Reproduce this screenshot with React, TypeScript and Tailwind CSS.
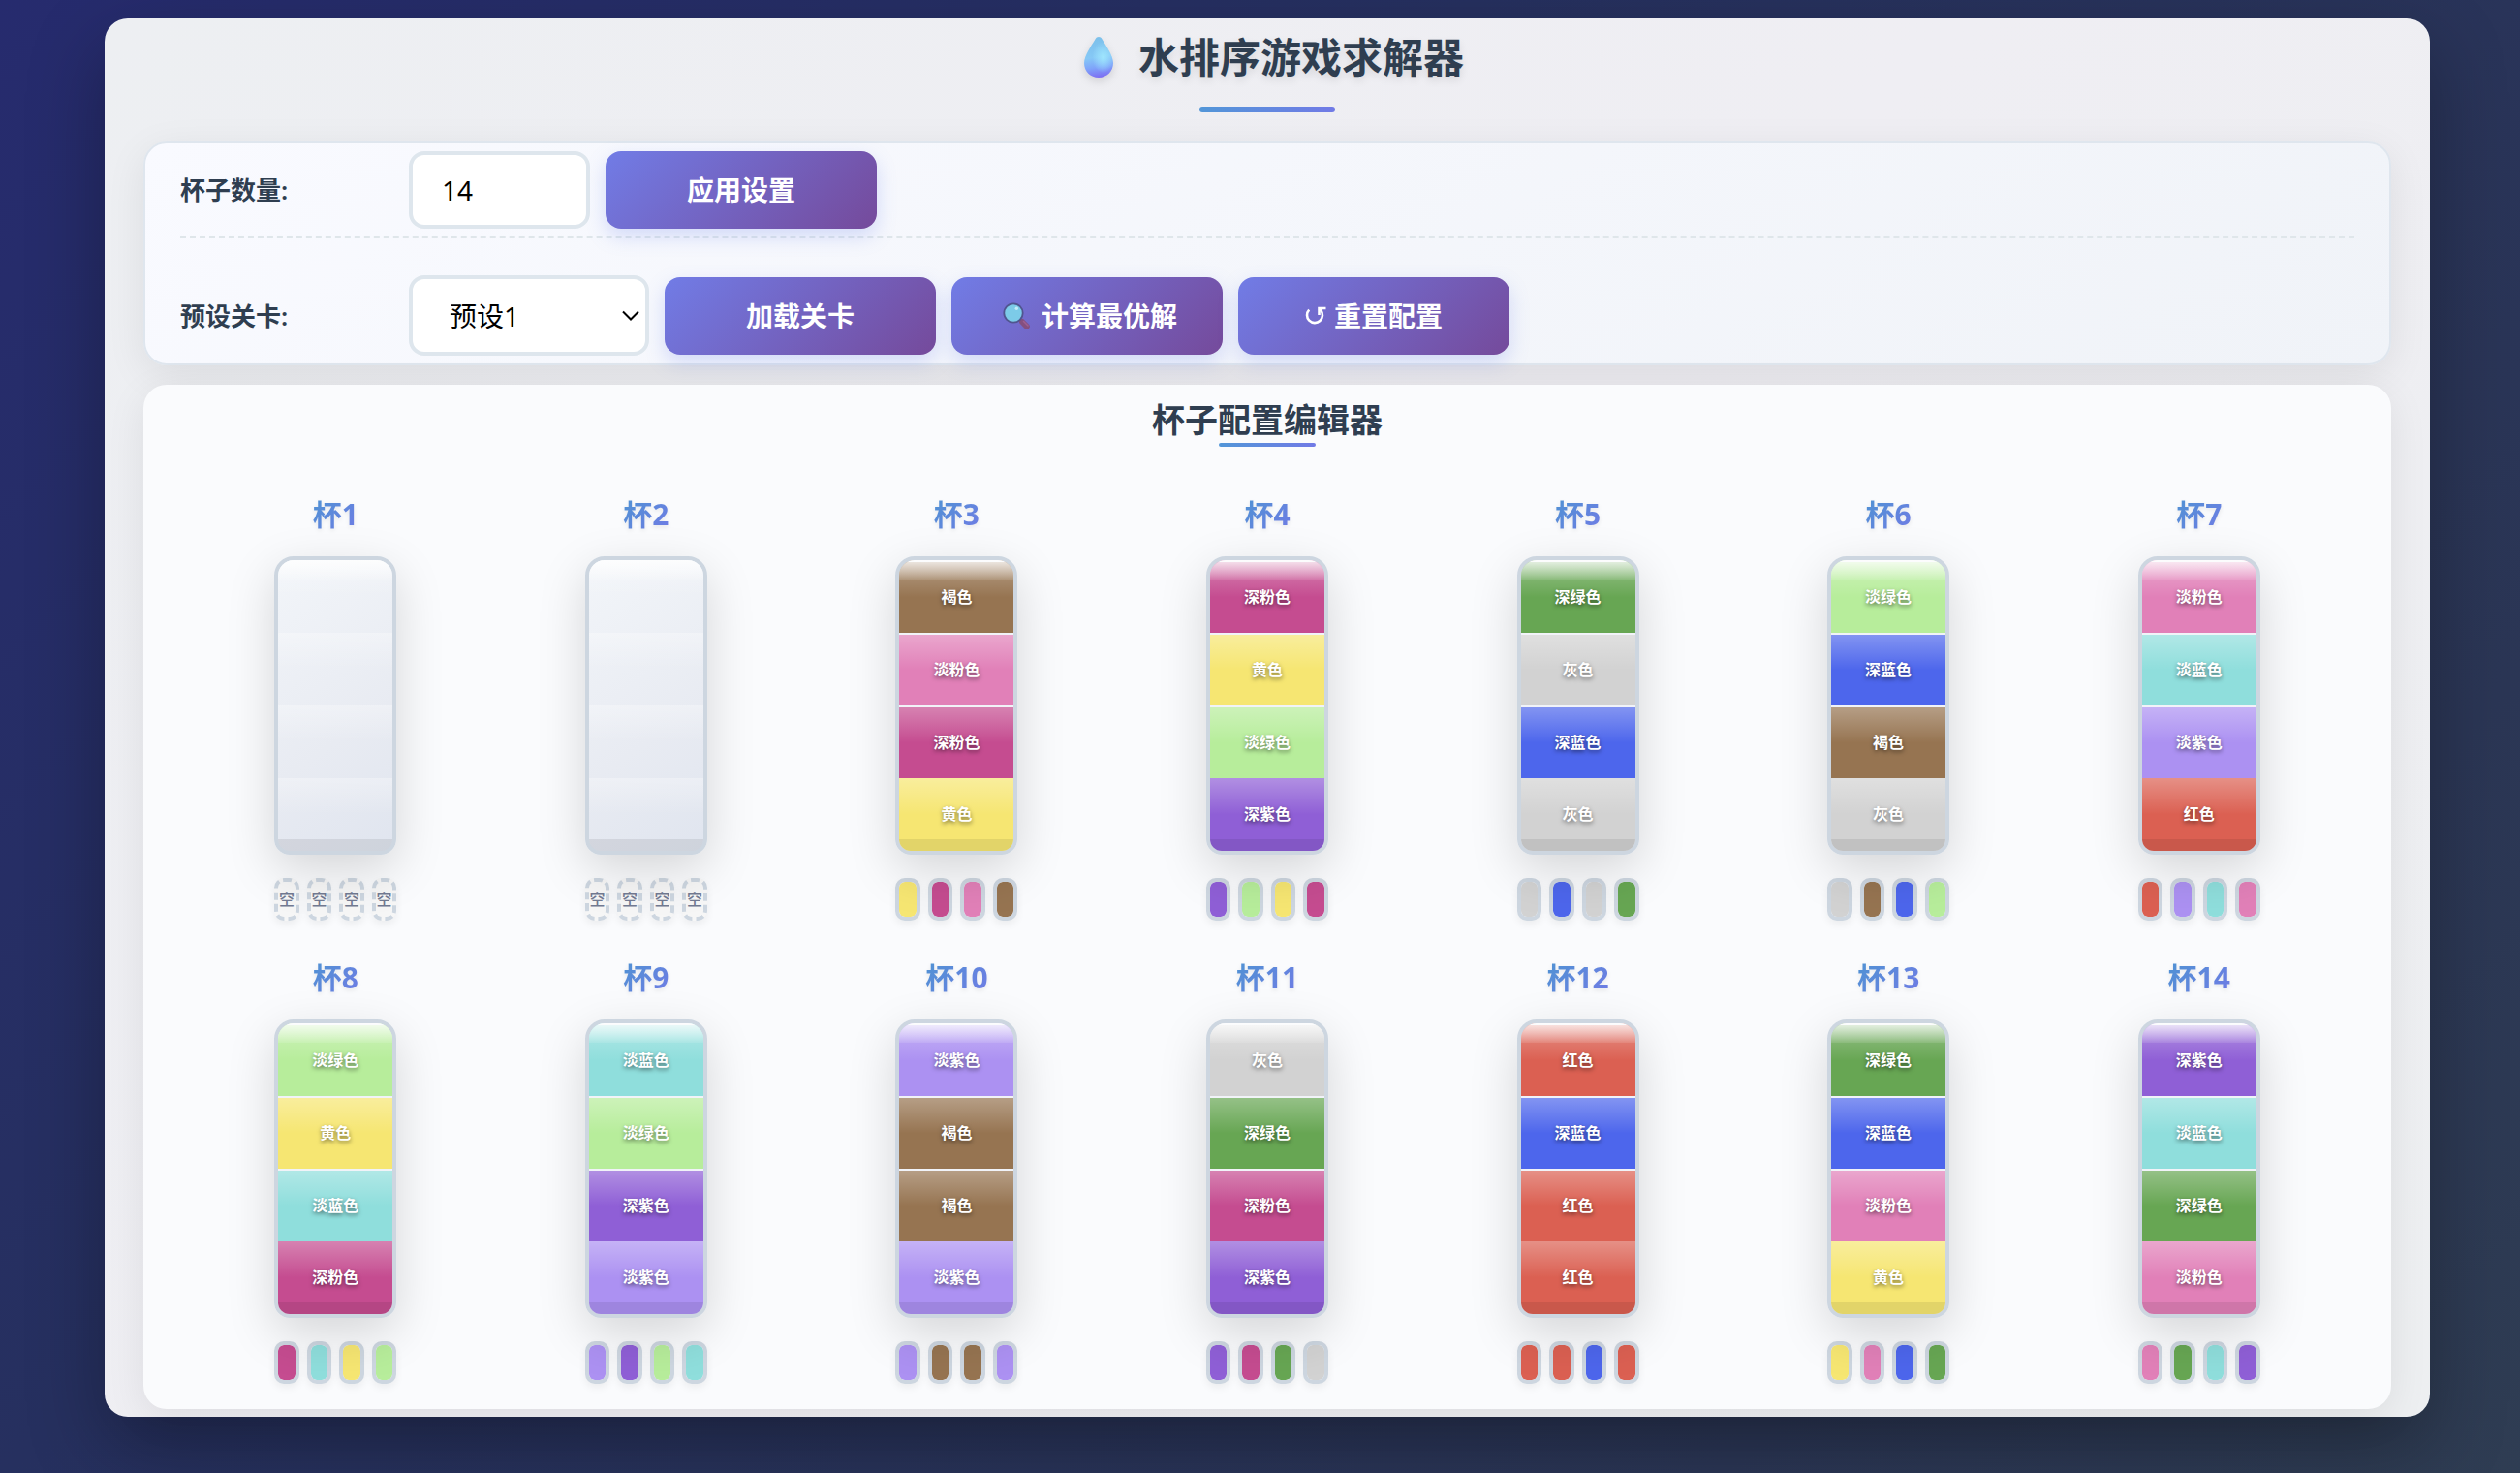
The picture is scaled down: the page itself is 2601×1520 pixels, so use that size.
import { useState } from "react";

type ColorName =
  | "褐色" | "淡粉色" | "深粉色" | "黄色" | "淡绿色" | "深紫色"
  | "深绿色" | "灰色" | "深蓝色" | "淡蓝色" | "淡紫色" | "红色";

const COLOR_CLASS: Record<ColorName, string> = {
  褐色: "bg-[#967451]",
  淡粉色: "bg-[#e180b8]",
  深粉色: "bg-[#c54c90]",
  黄色: "bg-[#f6e672]",
  淡绿色: "bg-[#b7ed9b]",
  深紫色: "bg-[#8f5fd6]",
  深绿色: "bg-[#67a653]",
  灰色: "bg-[#d2d2d2]",
  深蓝色: "bg-[#4d66ec]",
  淡蓝色: "bg-[#8fdedc]",
  淡紫色: "bg-[#ac91f2]",
  红色: "bg-[#db6052]",
};

type Layer = ColorName | null;

/* Layers of each cup, listed from top to bottom. */
const CUPS: Layer[][] = [
  [null, null, null, null],
  [null, null, null, null],
  ["褐色", "淡粉色", "深粉色", "黄色"],
  ["深粉色", "黄色", "淡绿色", "深紫色"],
  ["深绿色", "灰色", "深蓝色", "灰色"],
  ["淡绿色", "深蓝色", "褐色", "灰色"],
  ["淡粉色", "淡蓝色", "淡紫色", "红色"],
  ["淡绿色", "黄色", "淡蓝色", "深粉色"],
  ["淡蓝色", "淡绿色", "深紫色", "淡紫色"],
  ["淡紫色", "褐色", "褐色", "淡紫色"],
  ["灰色", "深绿色", "深粉色", "深紫色"],
  ["红色", "深蓝色", "红色", "红色"],
  ["深绿色", "深蓝色", "淡粉色", "黄色"],
  ["深紫色", "淡蓝色", "深绿色", "淡粉色"],
];

const BUTTON =
  "flex min-h-20 w-[280px] cursor-pointer items-center justify-center rounded-2xl bg-[linear-gradient(135deg,#717ce6_0%,#754a9b_100%)] text-[28px] leading-[42px] font-bold text-white shadow-[0_8px_20px_rgba(102,126,234,0.25)]";

const FIELD = "rounded-2xl border-4 border-[#dee6ed] bg-white text-[28px] text-black";

function DropIcon() {
  return (
    <svg viewBox="0 0 30 42" className="h-[42px] w-[30px] drop-shadow-[0_4px_4px_rgba(0,0,0,0.12)]" aria-hidden="true">
      <defs>
        <linearGradient id="dropBody" x1="0.4" y1="0" x2="0.5" y2="1">
          <stop offset="0" stopColor="#7cc0ea" />
          <stop offset="0.5" stopColor="#86c8f6" />
          <stop offset="0.75" stopColor="#7fa4fa" />
          <stop offset="1" stopColor="#7d6df2" />
        </linearGradient>
        <radialGradient id="dropGlow" cx="0.66" cy="0.5" r="0.38">
          <stop offset="0" stopColor="#9fe6fd" />
          <stop offset="1" stopColor="#9fe6fd" stopOpacity="0" />
        </radialGradient>
      </defs>
      <path d="M15 0c1.500 0 2.600.8 3.600 2.400C22.500 9 30 19.500 30 27c0 8.500-6.500 15-15 15S0 35.500 0 27C0 19.500 7.500 9 11.400 2.400 12.400.8 13.500 0 15 0z" fill="url(#dropBody)" />
      <path d="M15 0c1.500 0 2.600.8 3.600 2.400C22.500 9 30 19.500 30 27c0 8.500-6.500 15-15 15S0 35.500 0 27C0 19.500 7.500 9 11.400 2.400 12.400.8 13.500 0 15 0z" fill="url(#dropGlow)" />
    </svg>
  );
}

function SearchIcon() {
  return (
    <svg viewBox="0 0 28 28" className="size-7" aria-hidden="true">
      <path d="M17.500 17.500l3 3" stroke="#4f4f86" strokeWidth="2.400" />
      <path d="M20 20l4.800 4.800" stroke="#844f80" strokeWidth="6" strokeLinecap="round" />
      <path d="M21.500 19.500l4.500 4.500" stroke="#9c5f93" strokeWidth="1.600" strokeLinecap="round" />
      <circle cx="11" cy="11" r="9.700" fill="#7ccbe8" stroke="#50558f" strokeWidth="1.800" />
      <circle cx="14.300" cy="6.300" r="1.700" fill="#c3ecf8" />
    </svg>
  );
}

function ResetIcon() {
  return (
    <svg viewBox="0 0 22 22" className="size-[22px]" fill="none" stroke="white" strokeWidth="2.600" aria-hidden="true">
      <path d="M4.200 4.600A8 8 0 1 0 16.200 5" />
      <path d="M21.500 3h-7v7" />
      <path d="M14.500 3.500l3 2.500" />
    </svg>
  );
}

function Cup({ index, layers }: { index: number; layers: Layer[] }) {
  return (
    <article className="flex flex-col items-center">
      <h3 className="mb-5 bg-[linear-gradient(135deg,#4d94d2,#717ae6)] bg-clip-text text-[30px] leading-[46px] font-bold text-transparent drop-shadow-[0_2px_2px_rgba(0,0,0,0.08)]">
        杯{index}
      </h3>
      <div className="relative flex h-[308px] w-[126px] flex-col overflow-hidden rounded-t-[20px] rounded-b-2xl border-4 border-[#cdd6e0] bg-[linear-gradient(145deg,#f2f5f9_0%,#e8ebf2_60%,#e0e5ef_100%)] shadow-[0_16px_50px_rgba(0,0,0,0.15)]">
        {layers.map((layer, i) => (
          <div
            key={i}
            className={
              "flex h-1/4 flex-col " +
              (layer && i < 3 ? "border-t-2 border-[#f1f3f8] " : "") +
              (layer ? COLOR_CLASS[layer] : "")
            }
          >
            <div className="flex flex-1 items-center justify-center bg-[linear-gradient(to_bottom,rgba(255,255,255,0.3),rgba(255,255,255,0)_50%)] pb-0.5 text-base leading-6 font-bold text-white [text-shadow:0_2px_4px_rgba(0,0,0,0.5)]">
              {layer}
            </div>
          </div>
        ))}
        <span className="absolute inset-x-0 top-0 h-5 bg-[linear-gradient(to_bottom,rgba(255,255,255,0.8),rgba(255,255,255,0.1))]" />
        <span className="absolute inset-x-0 bottom-0 h-3 bg-black/8" />
      </div>
      <div className="mt-6 flex w-[126px] gap-2">
        {[...layers].reverse().map((layer, i) =>
          layer ? (
            <button
              key={i}
              type="button"
              aria-label={layer}
              className={"h-11 min-w-0 flex-1 cursor-pointer rounded-[10px] border-4 border-[#cdd6e0] bg-clip-padding shadow-[0_4px_8px_rgba(0,0,0,0.06)] " + COLOR_CLASS[layer]}
            />
          ) : (
            <button
              key={i}
              type="button"
              className="flex h-11 min-w-0 flex-1 cursor-pointer items-center justify-center rounded-[10px] border-4 border-dashed border-[#cdd6e0] bg-[#f6f6f6] text-base font-medium text-[#727a92] shadow-[0_4px_8px_rgba(0,0,0,0.06)]"
            >
              空
            </button>
          ),
        )}
      </div>
    </article>
  );
}

export default function App() {
  const [count, setCount] = useState(14);
  return (
    <div className="min-h-screen bg-[linear-gradient(135deg,#262b6e_0%,#26305f_37%,#2b3655_80%,#2f3d53_100%)] pt-[19px] pb-[58px] pl-[15px] font-['Noto_Sans','Noto_Sans_CJK_SC',sans-serif] text-[#2f3e50]">
      <main className="mx-auto w-full max-w-[2400px] rounded-3xl bg-[linear-gradient(135deg,#edeff2_0%,#efeef3_50%,#edeff1_100%)] px-10 pt-2 pb-2 shadow-[0_30px_80px_rgba(0,0,0,0.3)]">
        <header className="mb-[30px] flex flex-col items-center">
          <h1 className="flex items-center gap-[26px] pl-3.5 text-[42px] leading-[64px] font-bold [text-shadow:0_4px_8px_rgba(0,0,0,0.1)]">
            <DropIcon />
            水排序游戏求解器
          </h1>
          <span className="mt-[19px] h-1.5 w-[140px] rounded-full bg-[linear-gradient(to_right,#5296d8,#717ae6)]" />
        </header>

        <section className="rounded-3xl border-2 border-[#dfe6ee] bg-[linear-gradient(145deg,#f9faff_0%,#f0f3f8_100%)] px-9 py-2 shadow-[0_10px_40px_rgba(0,0,0,0.08)]">
          <div className="flex items-center gap-4 border-b-2 border-dashed border-[#dfe6ea] pb-2">
            <label htmlFor="cup-count" className="w-[220px] text-[26px] leading-10 font-semibold">
              杯子数量:
            </label>
            <input
              id="cup-count"
              type="text"
              inputMode="numeric"
              value={count}
              onChange={(e) => setCount(Number(e.target.value) || 0)}
              className={FIELD + " h-20 w-[187px] pl-[30px]"}
            />
            <button type="button" className={BUTTON}>应用设置</button>
          </div>
          <div className="flex items-center gap-4 pt-[38px]">
            <label htmlFor="preset" className="w-[220px] text-[26px] leading-10 font-semibold">
              预设关卡:
            </label>
            <div className="relative w-[248px]">
              <select id="preset" className={FIELD + " block h-[83px] w-full appearance-none pl-[38px]"}>
                <option>预设1</option>
                <option>预设2</option>
                <option>预设3</option>
              </select>
              <svg viewBox="0 0 18 12" className="pointer-events-none absolute top-9 right-2.5 h-3 w-[18px]" fill="none" stroke="black" strokeWidth="2" aria-hidden="true">
                <path d="M1 1.500l8 8 8-8" />
              </svg>
            </div>
            <button type="button" className={BUTTON}>加载关卡</button>
            <button type="button" className={BUTTON + " gap-3 pl-1.5"}>
              <SearchIcon />
              计算最优解
            </button>
            <button type="button" className={BUTTON + " gap-2"}>
              <ResetIcon />
              重置配置
            </button>
          </div>
        </section>

        <section className="mt-5 rounded-3xl bg-[#fafbfd] px-[38px] pt-3 pb-[26px] shadow-[0_10px_40px_rgba(0,0,0,0.08)]">
          <div className="mb-[47px] flex flex-col items-center">
            <h2 className="text-[34px] leading-[48px] font-semibold">杯子配置编辑器</h2>
            <span className="h-1 w-[100px] rounded-full bg-[linear-gradient(to_right,#5296d8,#717ae6)]" />
          </div>
          <div className="grid grid-cols-7 gap-y-9">
            {CUPS.map((layers, i) => (
              <Cup key={i} index={i + 1} layers={layers} />
            ))}
          </div>
        </section>
      </main>
    </div>
  );
}
